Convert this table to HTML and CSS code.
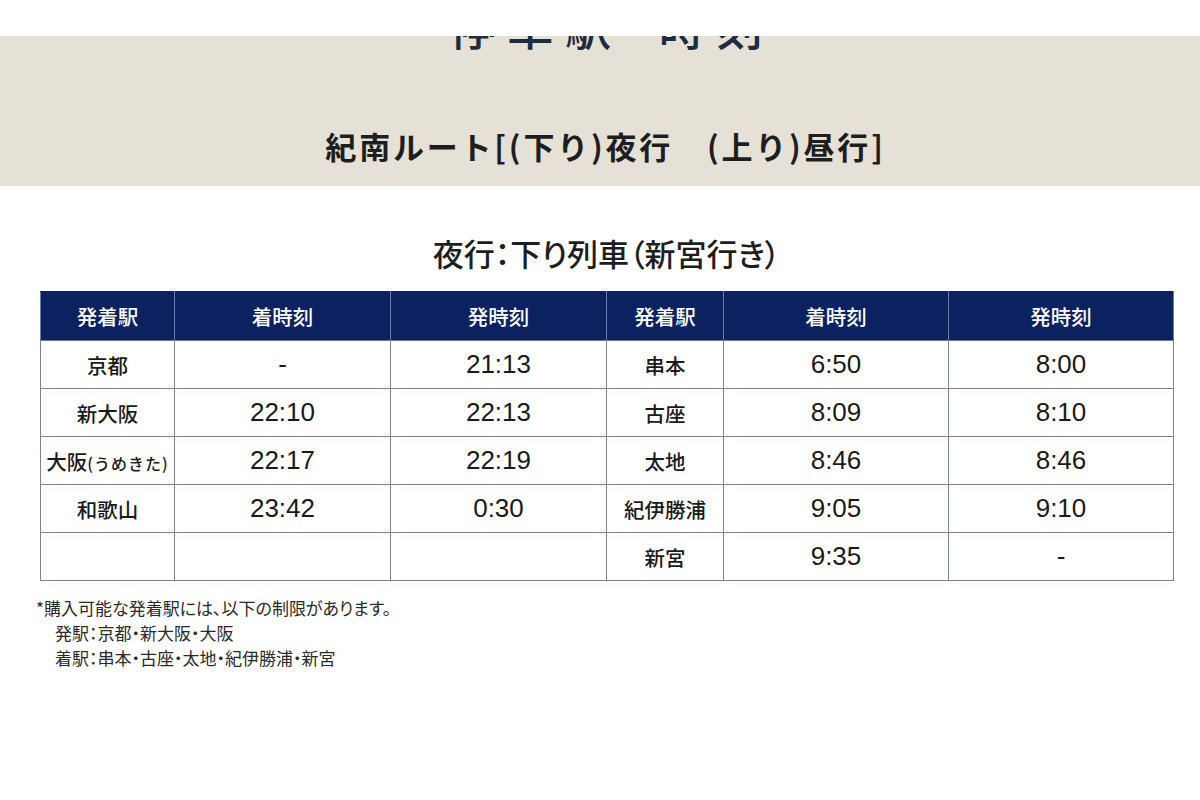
FILE: index.html
```html
<!DOCTYPE html>
<html lang="ja">
<head>
<meta charset="utf-8">
<title>紀南ルート 停車駅時刻</title>
<link rel="stylesheet" href="styles.css">
</head>
<body>
<div class="topbar"></div>
<section class="band">
  <h1 class="page-title">停車駅 時刻</h1>
  <h2 class="route">紀南ルート[(下り)夜行　(上り)昼行]</h2>
</section>
<main class="content">
  <h3 class="dir">夜行：下り列車（新宮行き）</h3>
  <table class="tt">
    <colgroup>
      <col class="c1"><col class="c2"><col class="c3"><col class="c4"><col class="c5"><col class="c6">
    </colgroup>
    <thead>
      <tr><th>発着駅</th><th>着時刻</th><th>発時刻</th><th>発着駅</th><th>着時刻</th><th>発時刻</th></tr>
    </thead>
    <tbody>
      <tr><td class="st">京都</td><td>-</td><td>21:13</td><td class="st">串本</td><td>6:50</td><td>8:00</td></tr>
      <tr><td class="st">新大阪</td><td>22:10</td><td>22:13</td><td class="st">古座</td><td>8:09</td><td>8:10</td></tr>
      <tr><td class="st tight">大阪<span class="small">(うめきた)</span></td><td>22:17</td><td>22:19</td><td class="st">太地</td><td>8:46</td><td>8:46</td></tr>
      <tr><td class="st">和歌山</td><td>23:42</td><td>0:30</td><td class="st">紀伊勝浦</td><td>9:05</td><td>9:10</td></tr>
      <tr><td class="st"></td><td></td><td></td><td class="st">新宮</td><td>9:35</td><td>-</td></tr>
    </tbody>
  </table>
  <div class="notes">
    <p>*購入可能な発着駅には、以下の制限があります。</p>
    <p class="ind">発駅：京都・新大阪・大阪</p>
    <p class="ind">着駅：串本・古座・太地・紀伊勝浦・新宮</p>
  </div>
</main>
</body>
</html>
```

FILE: styles.css
```css
html, body {
  margin: 0;
  padding: 0;
  background: #ffffff;
  font-family: "Liberation Sans", "Noto Sans CJK JP", sans-serif;
  color: #222222;
}

.topbar {
  height: 36px;
  background: #ffffff;
}

.band {
  height: 150px;
  background: #e6e1d6;
  overflow: hidden;
  display: flex;
  flex-direction: column;
  align-items: center;
}

.page-title {
  margin: -34px 0 0 0;
  padding-left: 24px;
  font-family: "Noto Sans CJK JP", sans-serif;
  font-weight: 500;
  font-size: 46px;
  line-height: 46px;
  letter-spacing: 12px;
  word-spacing: 13px;
  white-space: pre;
  color: #1d2d3d;
}

.route {
  margin: 81px 0 0 0;
  padding-left: 11px;
  font-family: "Noto Sans CJK JP", sans-serif;
  font-weight: 700;
  font-size: 31px;
  line-height: 34px;
  letter-spacing: 2.8px;
  color: #1e1e1e;
}

.content {
  width: 1133px;
  margin-left: 40px;
}

.dir {
  margin: 0;
  padding-top: 49px;
  height: 105px;
  box-sizing: border-box;
  text-align: center;
  font-family: "Noto Sans CJK JP", sans-serif;
  font-feature-settings: "palt";
  font-weight: 500;
  font-size: 31px;
  line-height: 36px;
  color: #1e1e1e;
}

.tt {
  width: 1133px;
  border-collapse: collapse;
  table-layout: fixed;
}

.c1 { width: 134px; }
.c2 { width: 216px; }
.c3 { width: 216px; }
.c4 { width: 117px; }
.c5 { width: 225px; }
.c6 { width: 225px; }

.tt th {
  height: 48px;
  background: #0c2160;
  color: #ffffff;
  font-family: "Noto Sans CJK JP", sans-serif;
  font-weight: 500;
  font-size: 20.5px;
  padding: 0;
  border: 1px solid #6f7a9e;
  border-top-color: #0c2160;
}

.tt td {
  height: 47px;
  padding: 0;
  text-align: center;
  border: 1px solid #7b809c;
  font-size: 26px;
  color: #1a1a1a;
}

.tt td.st {
  font-family: "Noto Sans CJK JP", sans-serif;
  font-weight: 500;
  font-size: 20.5px;
}

.tt td.tight {
  white-space: nowrap;
}

.small {
  font-size: 16px;
  letter-spacing: 1px;
}

.notes {
  margin-top: 14px;
  font-family: "Noto Sans CJK JP", sans-serif;
  font-feature-settings: "palt";
  font-size: 17px;
  line-height: 25px;
  color: #2a2a2a;
}

.notes p {
  margin: 0 0 0 -4px;
}

.notes p.ind {
  margin-left: 15px;
}
```
